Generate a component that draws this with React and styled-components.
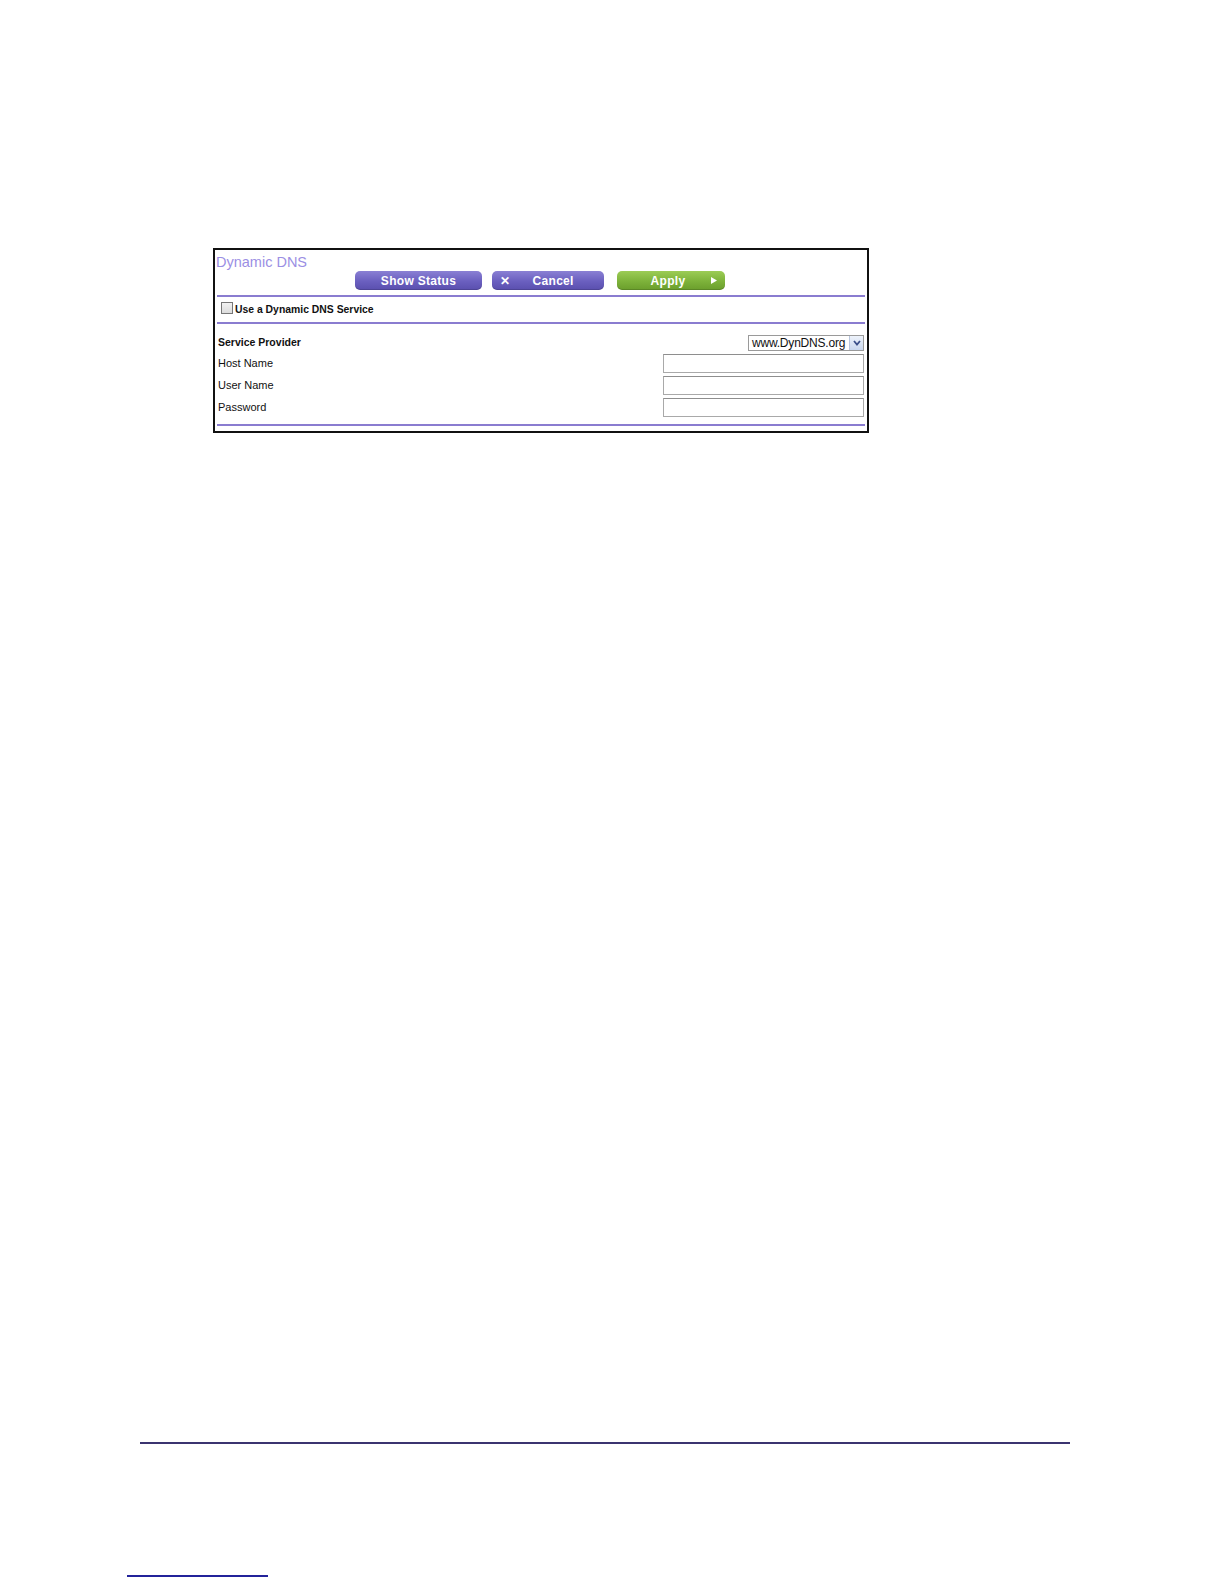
import React from 'react';
import styled, { createGlobalStyle } from 'styled-components';

const GlobalStyle = createGlobalStyle`
  html, body {
    margin: 0;
    padding: 0;
    background: #ffffff;
  }
  body {
    font-family: 'Liberation Sans', Arial, sans-serif;
  }
`;

const Page = styled.div`
  width: 1224px;
  height: 1584px;
  box-sizing: border-box;
  padding-top: 248px;
  display: flex;
  flex-direction: column;
  overflow: hidden;
`;

const Frame = styled.div`
  margin-left: 213px;
  width: 656px;
  height: 185px;
  box-sizing: border-box;
  border: 2px solid #111111;
  padding: 0 1px 0 1px;
  display: flex;
  flex-direction: column;
`;

const Title = styled.div`
  font-size: 14.5px;
  line-height: 16px;
  color: #9b8fe4;
  padding: 4px 0 0 0;
  height: 17px;
`;

const ButtonRow = styled.div`
  display: flex;
  justify-content: center;
  height: 20px;
  margin-left: -2px;
`;

const Button = styled.button`
  width: ${p => p.w}px;
  height: 19px;
  margin-right: ${p => p.gap || 0}px;
  border: none;
  border-radius: 5px;
  padding: 0 8px;
  box-sizing: border-box;
  display: flex;
  align-items: center;
  justify-content: ${p => (p.split ? 'space-between' : 'center')};
  font-family: 'Liberation Sans', Arial, sans-serif;
  font-weight: bold;
  font-size: 12px;
  letter-spacing: 0.3px;
  color: #ffffff;
  background: ${p =>
    p.green
      ? 'linear-gradient(#9ccc55, #7db23a 55%, #6a9e2c)'
      : 'linear-gradient(#8a80d4, #6a5fbf 55%, #5a4fae)'};
  box-shadow: inset 0 -1px 0 rgba(0, 0, 0, 0.15);
`;

const Label = styled.span`
  flex: 1;
  text-align: center;
`;

const Rule = styled.div`
  height: 2px;
  background: #8a7cd0;
  margin: ${p => p.m || '0'};
  margin-left: 1px;
  margin-right: 1px;
`;

const CheckRow = styled.label`
  display: flex;
  align-items: center;
  height: 25px;
  padding-left: 5px;
  font-size: 10.4px;
  font-weight: bold;
  color: #111111;
`;

const Box = styled.span`
  width: 10px;
  height: 10px;
  border: 1px solid #777777;
  background: linear-gradient(#f2f2f2, #dcdcdc);
  margin-right: 2px;
  margin-top: -3px;
`;

const Form = styled.div`
  display: flex;
  flex-direction: column;
  padding: 8px 2px 0 2px;
`;

const Row = styled.div`
  display: flex;
  align-items: center;
  justify-content: space-between;
  height: ${p => p.h || 22}px;
`;

const FieldLabel = styled.span`
  font-size: ${p => (p.bold ? 10.5 : 11)}px;
  color: #111111;
  font-weight: ${p => (p.bold ? 'bold' : 'normal')};
`;

const Select = styled.div`
  width: 116px;
  height: 16px;
  box-sizing: border-box;
  border: 1px solid #9a9a9a;
  display: flex;
  align-items: center;
  font-size: 12px;
  color: #111111;
  margin-top: 1px;
`;

const SelectText = styled.span`
  flex: 1;
  padding-left: 3px;
  letter-spacing: -0.2px;
`;

const Arrow = styled.span`
  width: 13px;
  height: 14px;
  background: linear-gradient(#eef3fb, #c9d7ee);
  border-left: 1px solid #b8c6de;
  display: flex;
  align-items: center;
  justify-content: center;
`;

const Input = styled.input`
  width: 201px;
  height: 19px;
  box-sizing: border-box;
  border: 1px solid #a9a9a9;
  border-top-color: #8e8e8e;
  padding: 0;
  margin: 0;
  background: #ffffff;
`;

const FooterRule = styled.div`
  margin-top: 1009px;
  margin-left: 140px;
  width: 930px;
  height: 1.5px;
  background: #3b3470;
`;

const PageRule = styled.div`
  margin-top: 131px;
  margin-left: 127px;
  width: 141px;
  height: 2px;
  background: #23239a;
`;

export default function App() {
  return (
    <>
      <GlobalStyle />
      <Page>
        <Frame>
          <Title>Dynamic DNS</Title>
          <ButtonRow>
            <Button w={127} gap={10}>Show Status</Button>
            <Button w={112} gap={13} split>
              <span>✕</span>
              <Label>Cancel</Label>
            </Button>
            <Button w={108} green split>
              <Label>Apply</Label>
              <svg width="6" height="7" viewBox="0 0 6 7">
                <path d="M0 0 L6 3.5 L0 7 Z" fill="#ffffff" />
              </svg>
            </Button>
          </ButtonRow>
          <Rule m="4px 0 0 0" />
          <CheckRow>
            <Box />
            Use a Dynamic DNS Service
          </CheckRow>
          <Rule />
          <Form>
            <Row h={20}>
              <FieldLabel bold>Service Provider</FieldLabel>
              <Select>
                <SelectText>www.DynDNS.org</SelectText>
                <Arrow>
                  <svg width="8" height="6" viewBox="0 0 8 6">
                    <path d="M1 1 L4 4.5 L7 1" stroke="#3a4f8a" strokeWidth="1.8" fill="none" />
                  </svg>
                </Arrow>
              </Select>
            </Row>
            <Row>
              <FieldLabel>Host Name</FieldLabel>
              <Input />
            </Row>
            <Row>
              <FieldLabel>User Name</FieldLabel>
              <Input />
            </Row>
            <Row>
              <FieldLabel>Password</FieldLabel>
              <Input />
            </Row>
          </Form>
          <Rule m="6px 0 0 0" />
        </Frame>
        <FooterRule />
        <PageRule />
      </Page>
    </>
  );
}
